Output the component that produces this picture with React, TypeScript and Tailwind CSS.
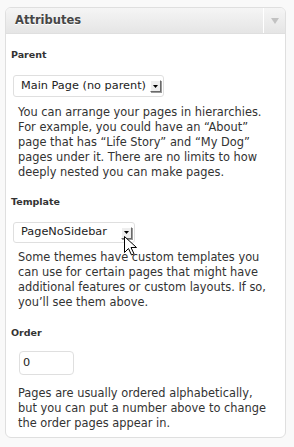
import React from "react";

function SelectButton() {
  return (
    <div className="flex h-[12px] w-[11px] items-center justify-center border border-t-white border-l-white border-r-[#6a6a6a] border-b-[#6a6a6a] bg-[#eeeeee] shadow-[1px_1px_0_#9a9a9a]">
      <svg width="5" height="3" viewBox="0 0 5 3">
        <path d="M0 0h5L2.5 3z" fill="#000" />
      </svg>
    </div>
  );
}

function Cursor() {
  return (
    <svg
      className="absolute left-[110px] top-[13px]"
      width="13"
      height="20"
      viewBox="0 0 13 20"
    >
      <path
        d="M0.5 0.5v16l4-4 3 6.5 2.5-1.2-3-6.3h5.5z"
        fill="#fff"
        stroke="#000"
        strokeWidth="1"
        strokeLinejoin="miter"
      />
    </svg>
  );
}

const label = "text-[9.5px] font-bold leading-[12px] text-[#333]";
const desc = "ml-[7px] w-[252px] text-[11.4px] leading-[15px] text-[#333]";

export default function App() {
  return (
    <div className="min-h-[447px] bg-[#f9f9f9] pt-[7px] pl-[5px] font-['DejaVu_Sans',sans-serif]">
      <div className="w-[281px] rounded-[6px] border border-[#dfdfdf] bg-white">
        {/* header */}
        <div className="flex h-[26px] rounded-t-[5px] border-b border-[#dfdfdf] bg-linear-to-b from-[#f5f5f5] to-[#e5e5e5]">
          <h3 className="flex-1 pl-[9px] text-[11.5px] font-bold leading-[25px] text-[#464646] [text-shadow:0_1px_0_#fff]">
            Attributes
          </h3>
          <div className="flex w-[22px] items-center justify-center border-l border-white">
            <svg width="8" height="6" viewBox="0 0 8 6">
              <path d="M0 0h8L4 6z" fill="#c2c2c2" />
            </svg>
          </div>
        </div>

        <div className="flex flex-col items-start px-[5px] pb-[6px]">
          <p className={`mt-[15px] ${label}`}>Parent</p>
          <div className="mt-[14px] ml-[2px] flex h-[22px] w-[151px] items-center rounded-[3px] border border-[#dfdfdf] pr-[2px] pl-[7px] text-[11.3px] text-[#222]">
            <span className="flex-1">Main Page (no parent)</span>
            <SelectButton />
          </div>
          <p className={`mt-[8px] ${desc}`}>
            You can arrange your pages in hierarchies. For example, you could
            have an “About” page that has “Life Story” and “My Dog” pages
            under it. There are no limits to how deeply nested you can make
            pages.
          </p>

          <p className={`mt-[16px] ${label}`}>Template</p>
          <div className="relative mt-[14px] ml-[2px] flex h-[21px] w-[122px] items-center rounded-[3px] border border-[#dfdfdf] pr-[2px] pl-[7px] text-[11.3px] text-[#222]">
            <span className="flex-1">PageNoSidebar</span>
            <SelectButton />
            <Cursor />
          </div>
          <p className={`mt-[7px] ${desc}`}>
            Some themes have custom templates you can use for certain pages
            that might have additional features or custom layouts. If so,
            you’ll see them above.
          </p>

          <p className={`mt-[17px] ${label}`}>Order</p>
          <div className="mt-[12px] ml-[8px] flex h-[24px] w-[55px] items-center rounded-[4px] border border-[#dfdfdf] pl-[3px] text-[11.3px] text-[#222]">
            0
          </div>
          <p className={`mt-[11px] ${desc}`}>
            Pages are usually ordered alphabetically, but you can put a number
            above to change the order pages appear in.
          </p>
        </div>
      </div>
    </div>
  );
}
